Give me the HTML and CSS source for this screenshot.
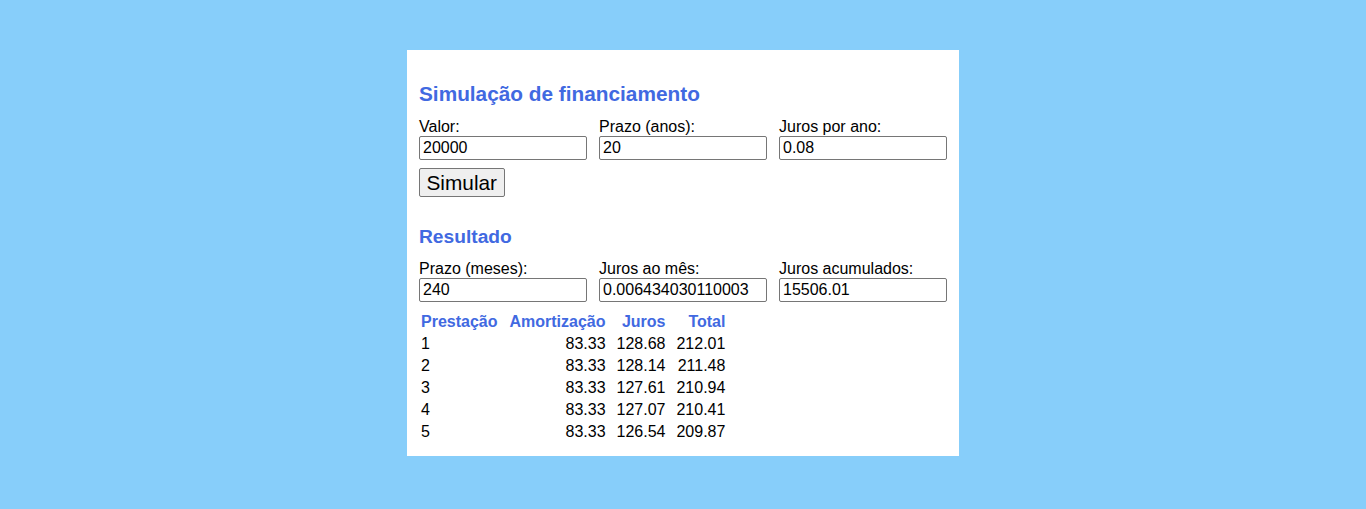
FILE: index.html
```html
<!DOCTYPE html>
<html lang="pt">
<head>
<meta charset="utf-8">
<title>Simulação de financiamento</title>
<link rel="stylesheet" href="styles.css">
</head>
<body>
<div class="card">
  <h2 class="title">Simulação de financiamento</h2>
  <div class="fields">
    <div class="field"><label class="lbl">Valor:</label><input class="inp" type="text" value="20000"></div>
    <div class="field"><label class="lbl">Prazo (anos):</label><input class="inp" type="text" value="20"></div>
    <div class="field"><label class="lbl">Juros por ano:</label><input class="inp" type="text" value="0.08"></div>
  </div>
  <button class="btn" type="button">Simular</button>
  <h3 class="subtitle">Resultado</h3>
  <div class="fields">
    <div class="field"><label class="lbl">Prazo (meses):</label><input class="inp" type="text" value="240"></div>
    <div class="field"><label class="lbl">Juros ao mês:</label><input class="inp" type="text" value="0.006434030110003"></div>
    <div class="field"><label class="lbl">Juros acumulados:</label><input class="inp" type="text" value="15506.01"></div>
  </div>
  <table class="tbl">
    <thead>
      <tr><th class="first">Prestação</th><th class="num">Amortização</th><th class="num">Juros</th><th class="num">Total</th></tr>
    </thead>
    <tbody>
      <tr><td class="first">1</td><td class="num">83.33</td><td class="num">128.68</td><td class="num">212.01</td></tr>
      <tr><td class="first">2</td><td class="num">83.33</td><td class="num">128.14</td><td class="num">211.48</td></tr>
      <tr><td class="first">3</td><td class="num">83.33</td><td class="num">127.61</td><td class="num">210.94</td></tr>
      <tr><td class="first">4</td><td class="num">83.33</td><td class="num">127.07</td><td class="num">210.41</td></tr>
      <tr><td class="first">5</td><td class="num">83.33</td><td class="num">126.54</td><td class="num">209.87</td></tr>
    </tbody>
  </table>
</div>
</body>
</html>
```
FILE: styles.css
```css
html, body {
  margin: 0;
  padding: 0;
}
body {
  background: #87cefa;
  font-family: "Liberation Sans", Arial, sans-serif;
  font-size: 16px;
  color: #000;
}
.card {
  width: 528px;
  margin: 50px auto 0;
  padding: 12px;
  background: #fff;
}
.title {
  margin: 20px 0 12px;
  font-size: 20.8px;
  line-height: 24px;
  font-weight: bold;
  color: #4169e1;
}
.subtitle {
  margin: 29px 0 12px;
  font-size: 19.2px;
  line-height: 22px;
  font-weight: bold;
  color: #4169e1;
}
.fields {
  display: grid;
  grid-template-columns: repeat(3, 168px);
  column-gap: 12px;
}
.field {
  display: flex;
  flex-direction: column;
}
.lbl {
  line-height: 18px;
  font-size: 16px;
}
.inp {
  box-sizing: border-box;
  width: 168px;
  height: 24px;
  margin: 0;
  padding: 1px 3px;
  border: 1px solid #767676;
  border-radius: 2px;
  font-family: "Liberation Sans", Arial, sans-serif;
  font-size: 16px;
  color: #000;
  background: #fff;
}
.btn {
  box-sizing: border-box;
  display: block;
  margin-top: 8px;
  height: 29px;
  padding: 0 6.5px;
  border: 1px solid #767676;
  border-radius: 2px;
  background: #efefef;
  font-family: "Liberation Sans", Arial, sans-serif;
  font-size: 20.8px;
  line-height: 24px;
  color: #000;
}
.tbl {
  margin-top: 8px;
  border-collapse: separate;
  border-spacing: 2px;
}
.tbl th, .tbl td {
  padding: 1px 8px 1px 1px;
  line-height: 18px;
  text-align: left;
}
.tbl .first {
  padding-left: 0;
  padding-right: 9px;
}
.tbl th {
  color: #4169e1;
  font-weight: bold;
}
.tbl .num {
  text-align: right;
}
```
